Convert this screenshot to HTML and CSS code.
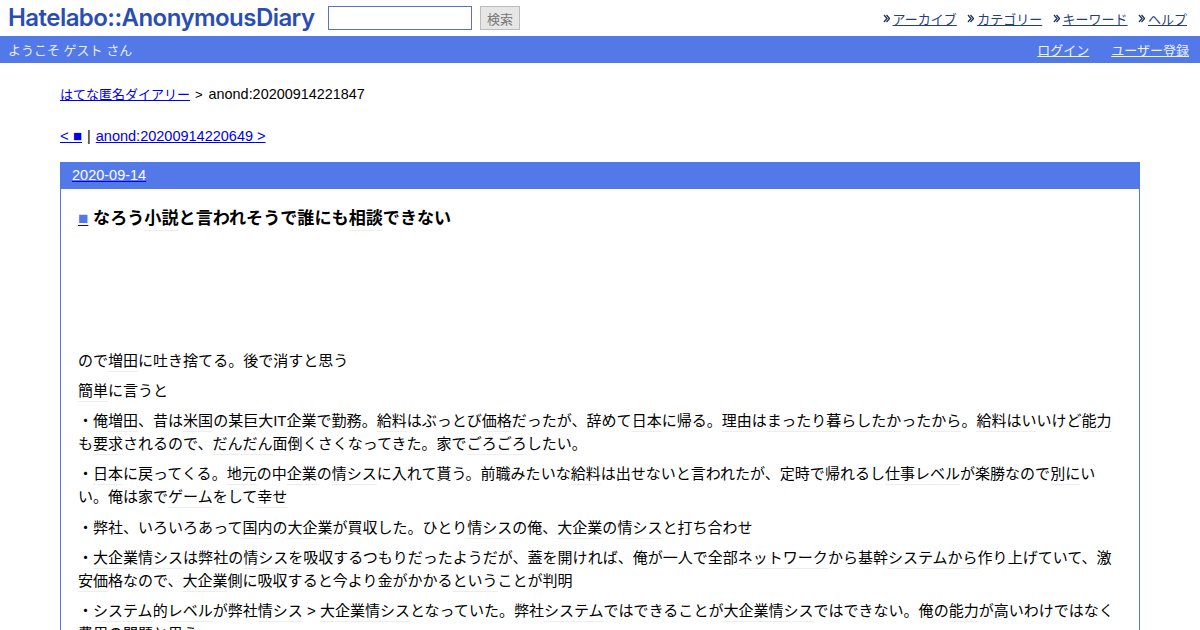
FILE: index.html
```html
<!DOCTYPE html>
<html lang="ja">
<head>
<meta charset="utf-8">
<title>なろう小説と言われそうで誰にも相談できない</title>
<link rel="stylesheet" href="styles.css">
</head>
<body>
<header class="top">
  <a class="logo" href="#">Hatelabo::AnonymousDiary</a>
  <form class="search">
    <input class="search-input" type="text">
    <button class="search-btn" type="button">検索</button>
  </form>
  <nav class="menu">
    <span class="menu-item"><svg class="arrow" viewBox="0 0 7 9" width="7" height="9"><path d="M1 1l3 3.5-3 3.5M3.5 1l3 3.5-3 3.5" fill="none" stroke="#1f3560" stroke-width="1.3"/></svg><a href="#">アーカイブ</a></span>
    <span class="menu-item"><svg class="arrow" viewBox="0 0 7 9" width="7" height="9"><path d="M1 1l3 3.5-3 3.5M3.5 1l3 3.5-3 3.5" fill="none" stroke="#1f3560" stroke-width="1.3"/></svg><a href="#">カテゴリー</a></span>
    <span class="menu-item"><svg class="arrow" viewBox="0 0 7 9" width="7" height="9"><path d="M1 1l3 3.5-3 3.5M3.5 1l3 3.5-3 3.5" fill="none" stroke="#1f3560" stroke-width="1.3"/></svg><a href="#">キーワード</a></span>
    <span class="menu-item"><svg class="arrow" viewBox="0 0 7 9" width="7" height="9"><path d="M1 1l3 3.5-3 3.5M3.5 1l3 3.5-3 3.5" fill="none" stroke="#1f3560" stroke-width="1.3"/></svg><a href="#">ヘルプ</a></span>
  </nav>
</header>
<div class="userbar">
  <span>ようこそ ゲスト さん</span>
  <span class="user-links"><a href="#">ログイン</a><a href="#">ユーザー登録</a></span>
</div>
<main class="page">
  <p class="crumb"><a href="#" class="crumb-link">はてな匿名ダイアリー</a><span class="gt">&gt;</span>anond:20200914221847</p>
  <p class="pager"><a href="#" class="prev">&lt; ■</a><span class="pipe">|</span><a href="#">anond:20200914220649 &gt;</a></p>
  <section class="day">
    <h2 class="day-head"><a href="#">2020-09-14</a></h2>
    <div class="day-body">
      <h3 class="title"><a href="#" class="sq">■</a> なろう<a class="kw">小説</a>と言われそうで誰にも<a class="kw">相談</a>できない</h3>
      <div class="spacer"></div>
      <p>ので<a class="kw">増田</a>に吐き捨てる。後で消すと思う</p>
      <p><a class="kw">簡単</a>に言うと</p>
      <p>・俺<a class="kw">増田</a>、昔は<a class="kw">米国</a>の某巨大IT企業で勤務。<a class="kw">給料</a>はぶっとび<a class="kw">価格</a>だったが、辞めて<a class="kw">日本</a>に帰る。<a class="kw">理由</a>は<a class="kw">まったり暮らしたか</a>った<a class="kw">から</a>。<a class="kw">給料</a><a class="kw">はい</a>いけど<a class="kw">能力</a>も<a class="kw">要求</a>されるので、<a class="kw">だんだん</a>面倒くさくなってきた。家で<a class="kw">ごろごろ</a>したい。</p>
      <p>・<a class="kw">日本</a>に戻ってくる。<a class="kw">地元</a>の中<a class="kw">企業</a>の<a class="kw">情シス</a>に入れて貰う。前職みたいな<a class="kw">給料</a>は出せないと言われたが、定時で帰れるし<a class="kw">仕事レベル</a>が楽勝なので<a class="kw">別に</a>いい。俺は家で<a class="kw">ゲーム</a>をして<a class="kw">幸せ</a></p>
      <p>・弊社、いろいろあって<a class="kw">国内</a>の<a class="kw">大企業</a>が買収した。ひとり<a class="kw">情シス</a>の俺、<a class="kw">大企業</a>の<a class="kw">情シス</a>と打ち合わせ</p>
      <p>・<a class="kw">大企業情シス</a>は弊社の<a class="kw">情シス</a>を吸収するつもりだったようだが、蓋を開ければ、俺が一人で全部<a class="kw">ネットワーク</a>から基幹<a class="kw">システムから</a>作り上げていて、激<a class="kw">安価</a>格なので、<a class="kw">大企業</a>側に吸収すると今より金がかかる<a class="kw">という</a>ことが判明</p>
      <p>・<a class="kw">システム</a>的<a class="kw">レベル</a>が弊社<a class="kw">情シス</a> &gt; <a class="kw">大企業情シス</a>となっていた。弊社<a class="kw">システム</a>ではできることが<a class="kw">大企業情シス</a>ではできない。俺の<a class="kw">能力</a>が高いわけではなく費用の問題と思う</p>
    </div>
  </section>
</main>
</body>
</html>
```
FILE: styles.css
```css
* { box-sizing: border-box; }
html, body { margin: 0; padding: 0; overflow: hidden; height: 630px; }
body {
  background: #fff;
  color: #000;
  font-family: "Liberation Sans", Arial, "Noto Sans CJK JP", sans-serif;
  font-size: 15px;
}
p, h2, h3 { margin: 0; }
a { color: #0000ee; }

.top {
  display: flex;
  align-items: center;
  height: 36px;
  padding: 0 13px 0 8px;
}
.logo {
  font-family: Inter, "Liberation Sans", sans-serif;
  font-size: 24px;
  font-weight: 600;
  color: #2a4db5;
  text-decoration: none;
  letter-spacing: -0.55px;
  width: 320px;
  white-space: nowrap;
  line-height: 36px;
}
.search { display: flex; align-items: center; gap: 8px; }
.search-input {
  width: 144px;
  height: 24px;
  margin: 0;
  padding: 0 4px;
  border: 1px solid #5a74b8;
  background: #fff;
}
.search-btn {
  width: 40px;
  height: 24px;
  padding: 0;
  border: 1px solid #bbb;
  background: #e6e6e6;
  color: #777;
  font-size: 13px;
  font-family: "Noto Sans CJK JP", sans-serif;
}
.menu { margin-left: auto; display: flex; gap: 10.4px; font-size: 13px; }
.menu-item { display: flex; align-items: center; gap: 3px; }
.menu a { color: #1f3f7f; }
.arrow { flex: none; }

.userbar {
  display: flex;
  justify-content: space-between;
  align-items: center;
  height: 27px;
  padding: 0 11px 0 8px;
  background: #5279e7;
  color: #e6ecfb;
  font-size: 13px;
}
.user-links { display: flex; gap: 22px; }
.user-links a { color: #eef2fd; }

.page { padding: 0 60px; }
.crumb { margin-top: 21px; line-height: 20px; font-size: 14.4px; }
.crumb-link { font-size: 13px; }
.gt { font-size: 13px; margin: 0 6px 0 5px; }
.pager { margin-top: 21px; line-height: 20px; font-size: 14.5px; }
.prev { font-size: 15px; }
.pipe { margin: 0 5px; }

.day { margin-top: 16px; border: 1px solid #5279e7; border-bottom: 0; }
.day-head {
  background: #5279e7;
  height: 26px;
  padding: 0 11px;
  font-size: 14.5px;
  font-weight: normal;
  line-height: 24px;
}
.day-head a { color: #fff; text-decoration-color: #0000ee; }
.day-body { padding: 0 17px; line-height: 23px; font-size: 15.02px; }
.title { margin-top: 18px; font-size: 17.1px; line-height: 24px; font-weight: bold; }
.sq { color: #5279e7; text-decoration-color: #0000ee; }
.spacer { height: 118.2px; }
.day-body p { margin-bottom: 7.1px; }
.kw { color: inherit; text-decoration: none; border-bottom: 1px solid #eee; padding-bottom: 2px; }
```
